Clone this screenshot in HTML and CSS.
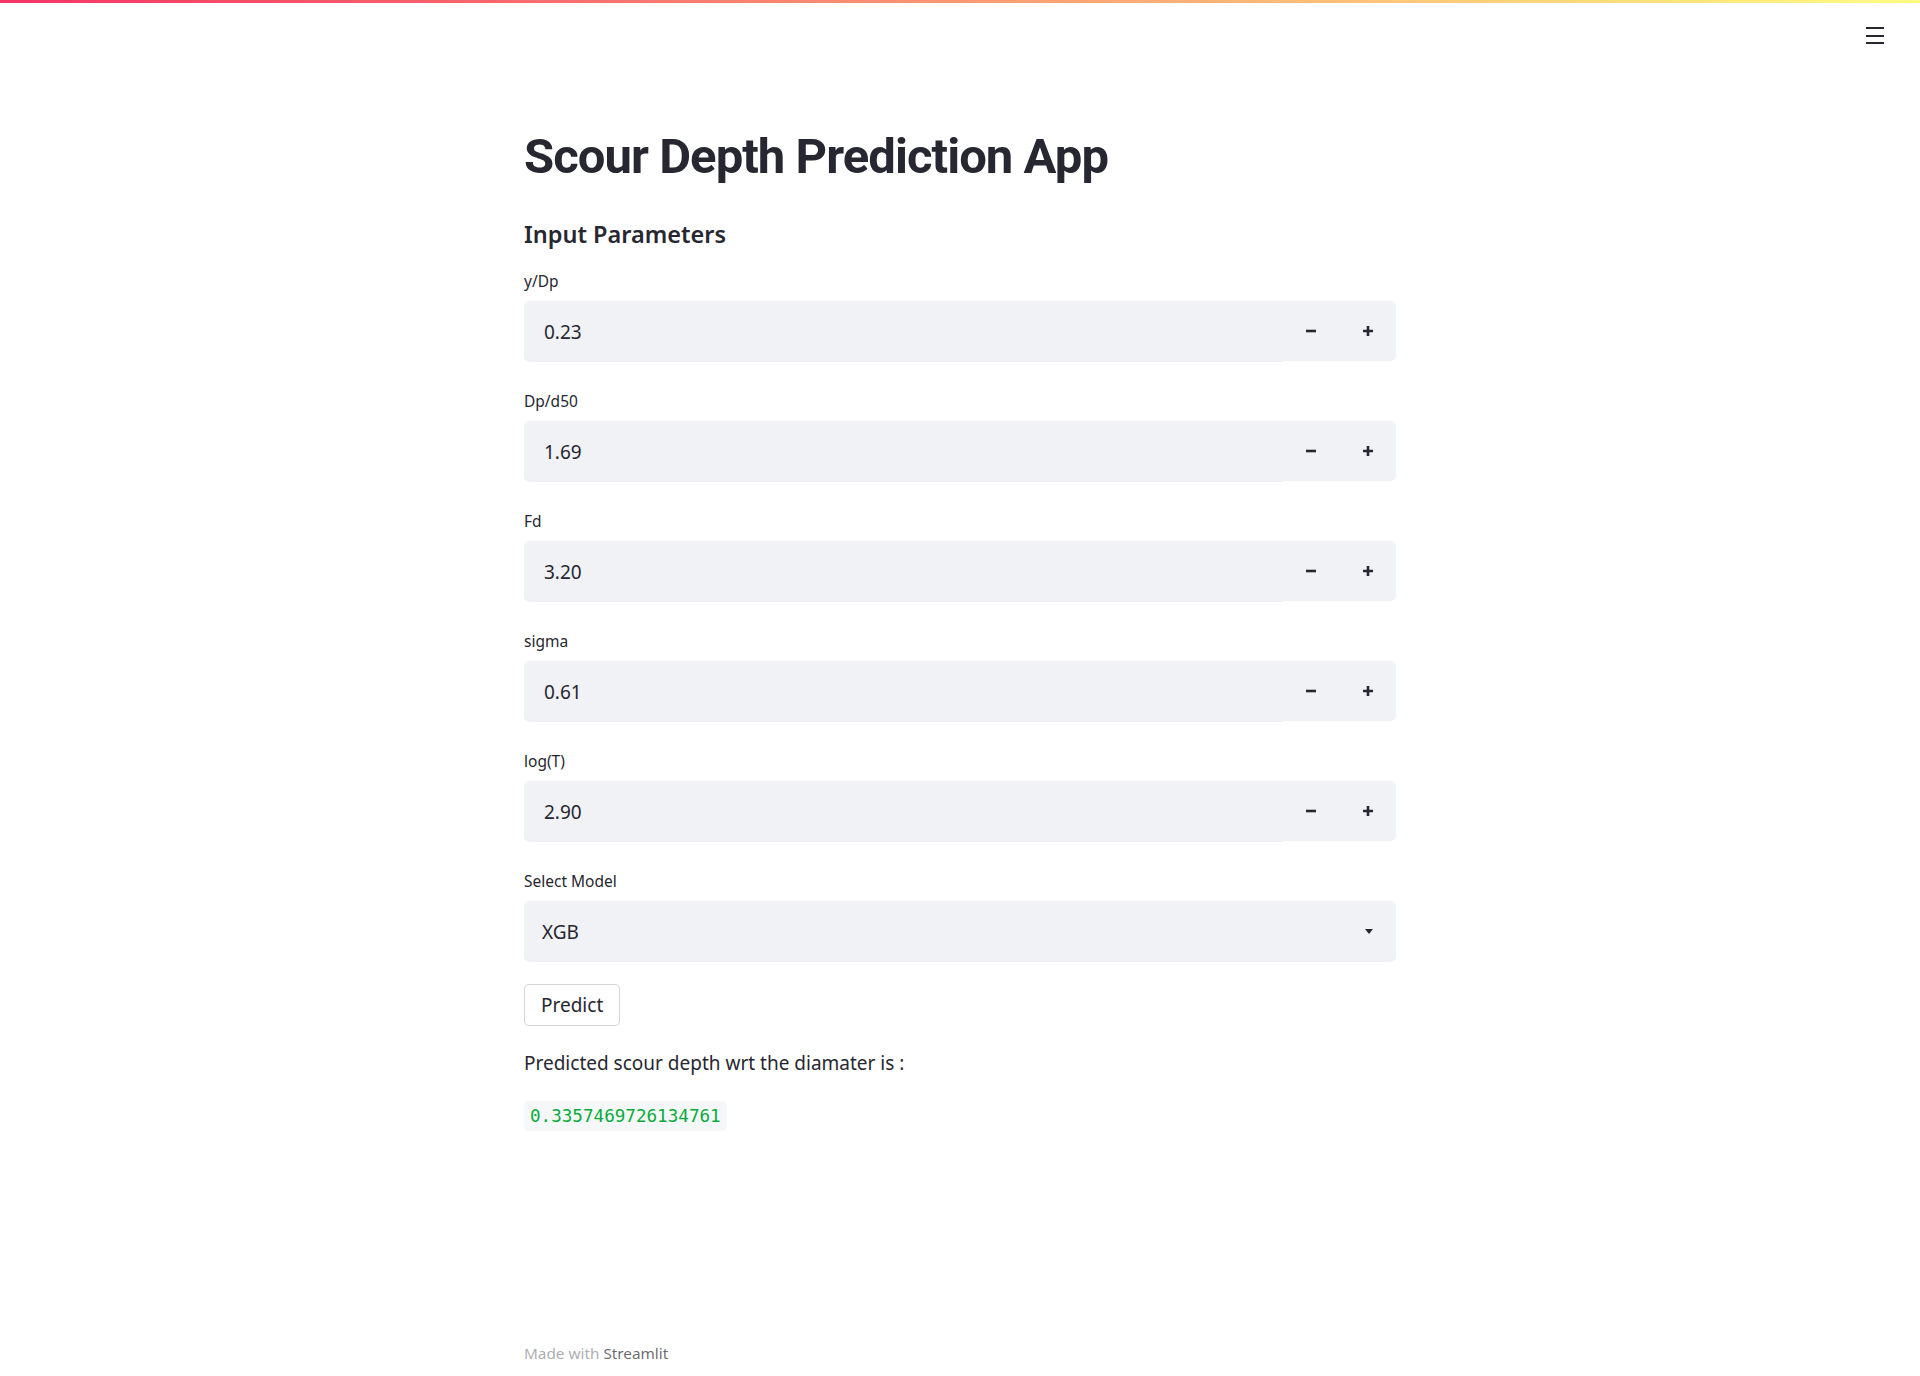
FILE: index.html
```html
<!DOCTYPE html>
<html lang="en">
<head>
<meta charset="utf-8">
<title>Scour Depth Prediction App</title>
<link rel="stylesheet" href="styles.css">
</head>
<body>
<header class="app-header">
  <div class="decoration"></div>
  <button class="menu-btn" aria-label="Menu">
    <span></span><span></span><span></span>
  </button>
</header>
<main class="main">
  <div class="block">
    <h1 class="title">Scour Depth Prediction App</h1>
    <h3 class="subheader">Input Parameters</h3>

    <div class="widget">
      <label class="w-label">y/Dp</label>
      <div class="num-input">
        <div class="num-field">0.23</div>
        <div class="steppers">
          <button class="step" aria-label="Decrement"><svg viewBox="0 0 10 10" width="10" height="10"><path d="M0 5H10"/></svg></button>
          <button class="step" aria-label="Increment"><svg viewBox="0 0 10 10" width="10" height="10"><path d="M0 5H10M5 0V10"/></svg></button>
        </div>
      </div>
    </div>
    <div class="widget">
      <label class="w-label">Dp/d50</label>
      <div class="num-input">
        <div class="num-field">1.69</div>
        <div class="steppers">
          <button class="step" aria-label="Decrement"><svg viewBox="0 0 10 10" width="10" height="10"><path d="M0 5H10"/></svg></button>
          <button class="step" aria-label="Increment"><svg viewBox="0 0 10 10" width="10" height="10"><path d="M0 5H10M5 0V10"/></svg></button>
        </div>
      </div>
    </div>
    <div class="widget">
      <label class="w-label">Fd</label>
      <div class="num-input">
        <div class="num-field">3.20</div>
        <div class="steppers">
          <button class="step" aria-label="Decrement"><svg viewBox="0 0 10 10" width="10" height="10"><path d="M0 5H10"/></svg></button>
          <button class="step" aria-label="Increment"><svg viewBox="0 0 10 10" width="10" height="10"><path d="M0 5H10M5 0V10"/></svg></button>
        </div>
      </div>
    </div>
    <div class="widget">
      <label class="w-label">sigma</label>
      <div class="num-input">
        <div class="num-field">0.61</div>
        <div class="steppers">
          <button class="step" aria-label="Decrement"><svg viewBox="0 0 10 10" width="10" height="10"><path d="M0 5H10"/></svg></button>
          <button class="step" aria-label="Increment"><svg viewBox="0 0 10 10" width="10" height="10"><path d="M0 5H10M5 0V10"/></svg></button>
        </div>
      </div>
    </div>
    <div class="widget">
      <label class="w-label">log(T)</label>
      <div class="num-input">
        <div class="num-field">2.90</div>
        <div class="steppers">
          <button class="step" aria-label="Decrement"><svg viewBox="0 0 10 10" width="10" height="10"><path d="M0 5H10"/></svg></button>
          <button class="step" aria-label="Increment"><svg viewBox="0 0 10 10" width="10" height="10"><path d="M0 5H10M5 0V10"/></svg></button>
        </div>
      </div>
    </div>
    <div class="widget">
      <label class="w-label">Select Model</label>
      <div class="select">
        <span class="select-value">XGB</span>
        <span class="caret"></span>
      </div>
    </div>

    <button class="predict">Predict</button>
    <p class="result-text">Predicted scour depth wrt the diamater is :</p>
    <code class="result-code">0.3357469726134761</code>

    <footer class="footer">Made with <span class="footer-brand">Streamlit</span></footer>
  </div>
</main>
</body>
</html>
```
FILE: styles.css
```css
* { box-sizing: border-box; }
html, body { margin: 0; padding: 0; background: #ffffff; }
body {
  font-family: "Noto Sans", "Open Sans", sans-serif;
  color: #262730;
  height: 1376px;
  overflow: hidden;
}
.app-header {
  position: fixed;
  top: 0; left: 0; right: 0;
  height: 60px;
  z-index: 10;
}
.decoration {
  height: 3px;
  background: linear-gradient(90deg, #f63366, #fffd80);
}
.menu-btn {
  position: absolute;
  top: 27px;
  right: 36px;
  width: 18px;
  height: 17px;
  padding: 0;
  border: 0;
  background: transparent;
  display: flex;
  flex-direction: column;
  justify-content: space-between;
}
.menu-btn span {
  display: block;
  height: 2px;
  width: 18px;
  background: #262730;
}
.main { display: flex; justify-content: center; }
.block {
  width: 912px;
  padding: 122px 20px 0;
  display: flex;
  flex-direction: column;
  align-items: flex-start;
}
.title {
  margin: 0;
  padding-top: 3px;
  font-family: "Roboto", "Noto Sans", sans-serif;
  font-size: 49px;
  font-weight: 700;
  line-height: 63px;
  height: 66px;
  letter-spacing: -0.95px;
  color: #262730;
}
.subheader {
  margin: 28px 0 0;
  font-size: 23.5px;
  font-weight: 600;
  line-height: 36px;
  height: 36px;
}
.widget { width: 100%; }
.subheader + .widget { margin-top: 18px; }
.widget + .widget { margin-top: 28px; }
.w-label {
  display: block;
  font-size: 15.5px;
  line-height: 20px;
  height: 21px;
  padding-top: 1px;
  margin-bottom: 10px;
}
.num-input {
  display: flex;
  height: 61px;
}
.num-field {
  flex: 1;
  background: #f0f2f6;
  border-radius: 5px 0 0 5px;
  padding-left: 20px;
  display: flex;
  align-items: center;
  font-size: 19px;
}
.steppers {
  display: flex;
  width: 113px;
  height: 60px;
  background: #f0f2f6;
  border-radius: 0 5px 5px 0;
}
.step {
  flex: 1;
  border: 0;
  background: transparent;
  padding: 0;
  display: flex;
  align-items: center;
  justify-content: center;
}
.step svg {
  stroke: #262730;
  stroke-width: 2.6;
  fill: none;
}
.select {
  height: 61px;
  background: #f0f2f6;
  border-radius: 5px;
  display: flex;
  align-items: center;
  justify-content: space-between;
  padding: 0 23px 0 18px;
  font-size: 19px;
}
.caret {
  width: 0; height: 0;
  border-left: 4.5px solid transparent;
  border-right: 4.5px solid transparent;
  border-top: 5px solid #262730;
}
.predict {
  margin-top: 22px;
  height: 42px;
  padding: 0 16px;
  border: 1px solid rgba(38, 39, 48, 0.2);
  border-radius: 5px;
  background: #fff;
  font-family: inherit;
  font-size: 19px;
  color: #262730;
}
.result-text {
  margin: 22px 0 0;
  font-size: 19px;
  line-height: 30px;
}
.result-code {
  margin-top: 23px;
  height: 30px;
  line-height: 30px;
  padding: 0 6px;
  border-radius: 5px;
  background: #f6f7f9;
  color: #09ab3b;
  font-family: "DejaVu Sans Mono", monospace;
  font-size: 17.6px;
}
.footer {
  margin-top: 212px;
  font-size: 15.3px;
  line-height: 20px;
  color: rgba(38, 39, 48, 0.4);
}
.footer-brand { color: rgba(38, 39, 48, 0.7); }
```
